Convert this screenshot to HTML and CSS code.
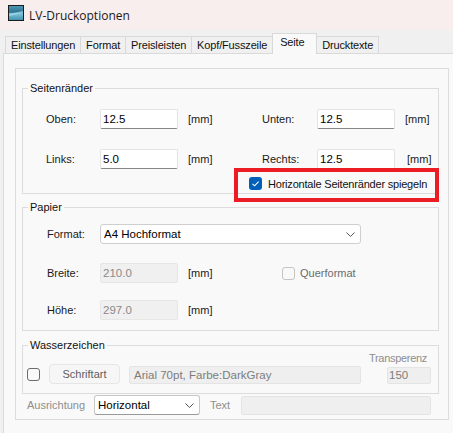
FILE: index.html
```html
<!DOCTYPE html>
<html lang="de">
<head>
<meta charset="utf-8">
<title>LV-Druckoptionen</title>
<link rel="stylesheet" href="styles.css">
</head>
<body>
<div class="titlebar">
  <svg class="appicon" width="16" height="16" viewBox="0 0 16 16">
    <defs>
      <linearGradient id="ig" x1="0" y1="0" x2="0" y2="1">
        <stop offset="0" stop-color="#4f9ab8"/>
        <stop offset="0.45" stop-color="#2d7390"/>
        <stop offset="0.55" stop-color="#7cc2d9"/>
        <stop offset="1" stop-color="#3e8eab"/>
      </linearGradient>
    </defs>
    <rect x="0.5" y="0.5" width="15" height="15" fill="url(#ig)" stroke="#1b1b1b"/>
    <path d="M1 9 L15 6 L15 8 L1 11 Z" fill="#a6dbe9" opacity="0.7"/>
  </svg>
  <span class="title">LV-Druckoptionen</span>
</div>

<div class="tabs">
  <div class="tab">Einstellungen</div>
  <div class="tab">Format</div>
  <div class="tab">Preisleisten</div>
  <div class="tab">Kopf/Fusszeile</div>
  <div class="tab active">Seite</div>
  <div class="tab">Drucktexte</div>
</div>

<div class="panel">
  <div class="frame">
    <fieldset class="group">
      <legend>Seitenränder</legend>
      <div class="margins">
        <div class="margin-grid">
          <span class="lbl">Oben:</span>
          <span class="input">12.5</span>
          <span></span>
          <span class="unit">[mm]</span>
          <span class="lbl">Unten:</span>
          <span class="input">12.5</span>
          <span></span>
          <span class="unit">[mm]</span>

          <span class="lbl">Links:</span>
          <span class="input">5.0</span>
          <span></span>
          <span class="unit">[mm]</span>
          <span class="lbl">Rechts:</span>
          <span class="input">12.5</span>
          <span></span>
          <span class="unit unit-r">[mm]</span>
        </div>
        <div class="mirror-row">
          <span class="cb checked">
            <svg width="13" height="13" viewBox="0 0 13 13"><path d="M3.5 6.8 L5.6 8.8 L9.6 4.6" fill="none" stroke="#fff" stroke-width="1.1"/></svg>
          </span>
          <span class="cb-text">Horizontale Seitenränder spiegeln</span>
          <div class="highlight"></div>
        </div>
      </div>
    </fieldset>

    <fieldset class="group group-paper">
      <legend>Papier</legend>
      <div class="paper">
        <div class="prow">
          <span class="lbl">Format:</span>
          <span class="select select-format">
            <span>A4 Hochformat</span>
            <svg width="9" height="5" viewBox="0 0 9 5"><path d="M0.5 0.5 L4.5 4.5 L8.5 0.5" fill="none" stroke="#555" stroke-width="1"/></svg>
          </span>
        </div>
        <div class="prow prow-2">
          <span class="lbl">Breite:</span>
          <span class="input disabled">210.0</span>
          <span></span>
          <span class="unit">[mm]</span>
          <span class="check-dis"><span class="cb off"></span><span class="dis-text">Querformat</span></span>
        </div>
        <div class="prow prow-3">
          <span class="lbl">Höhe:</span>
          <span class="input disabled">297.0</span>
          <span></span>
          <span class="unit">[mm]</span>
          <span></span>
        </div>
      </div>
    </fieldset>

    <fieldset class="group group-water">
      <legend>Wasserzeichen</legend>
      <div class="water">
        <span class="cb plain"></span>
        <span class="button">Schriftart</span>
        <span class="field field-font">Arial 70pt, Farbe:DarkGray</span>
        <div class="transp">
          <span class="dis-label">Transperenz</span>
          <span class="field field-num">150</span>
        </div>
      </div>
    </fieldset>

    <div class="align-row">
      <span class="dis-label align-lbl">Ausrichtung</span>
      <span class="select select-align">
        <span>Horizontal</span>
        <svg width="9" height="5" viewBox="0 0 9 5"><path d="M0.5 0.5 L4.5 4.5 L8.5 0.5" fill="none" stroke="#555" stroke-width="1"/></svg>
      </span>
      <span class="dis-label text-lbl">Text</span>
      <span class="field field-text"></span>
    </div>
  </div>
</div>
</body>
</html>
```

FILE: styles.css
```css
html, body {
  margin: 0;
  padding: 0;
}
body {
  width: 453px;
  height: 433px;
  overflow: hidden;
  background: #f0f0f0;
  font-family: "Liberation Sans", Arial, sans-serif;
  font-size: 11px;
  color: #1a1a1a;
}

/* title bar */
.titlebar {
  height: 30px;
  background: #f9eeee;
  display: flex;
  align-items: center;
  padding-left: 8px;
  box-sizing: border-box;
}
.appicon {
  display: block;
  margin-bottom: 4px;
}
.title {
  margin-left: 5px;
  font-family: "Open Sans", "Noto Sans", sans-serif;
  font-size: 12px;
  color: #1a1a1a;
}

/* tabs */
.tabs {
  height: 23px;
  display: flex;
  align-items: flex-end;
  padding-left: 5px;
}
.tab {
  height: 17px;
  box-sizing: border-box;
  border: 1px solid #d9d9d9;
  border-bottom: none;
  margin-right: -1px;
  padding: 0 5px;
  line-height: 17px;
  background: #f0f0f0;
  color: #111;
  white-space: nowrap;
  letter-spacing: -0.15px;
}
.tab.active {
  height: 21px;
  margin-bottom: -1px;
  padding: 0 9px 0 7px;
  line-height: 16px;
  background: #f9f9f9;
  position: relative;
  z-index: 1;
  width: 45px;
}

/* panel */
.panel {
  margin-left: 3px;
  border-left: 1px solid #dadada;
  border-top: 1px solid #dadada;
  background: #f9f9f9;
  padding: 14px 0 20px 11px;
  height: 400px;
  box-sizing: border-box;
}
.frame {
  width: 434px;
  box-sizing: border-box;
  border: 1px solid #dcdcdc;
  padding: 13px 9px 4px 6px;
}

/* group boxes */
.group {
  margin: 0;
  padding: 0;
  border: 1px solid #dcdcdc;
  min-width: 0;
}
.group legend {
  margin-left: 5px;
  padding: 0 2px;
  line-height: 13px;
  color: #111;
}
.group-paper {
  margin-top: 7px;
}
.group-water {
  margin-top: 8px;
}

.lbl,
.unit {
  color: #1a1a1a;
}
.unit-r {
  padding-left: 2px;
}

.input {
  height: 20px;
  box-sizing: border-box;
  background: #fff;
  border: 1px solid #e3e3e3;
  border-bottom-color: #868686;
  border-radius: 2px;
  padding-left: 2px;
  line-height: 18px;
  font-size: 11.5px;
  color: #000;
}
.input.disabled {
  background: #f0f0f0;
  border-color: #e6e6e6;
  color: #8a8a8a;
}

/* Seitenränder */
.margins {
  padding: 14px 0 3px 23px;
}
.margin-grid {
  display: grid;
  grid-template-columns: 54px 78px 10px 74px 55px 78px 10px auto;
  grid-template-rows: 20px 20px;
  row-gap: 20px;
  align-items: center;
}
.mirror-row {
  position: relative;
  margin-top: 8px;
  margin-left: 203px;
  height: 13px;
  display: flex;
  align-items: center;
}
.highlight {
  position: absolute;
  left: -15px;
  top: -9px;
  width: 205px;
  height: 34px;
  box-sizing: border-box;
  border: 4px solid #ec1c24;
}
.cb {
  width: 13px;
  height: 13px;
  box-sizing: border-box;
  border-radius: 3px;
  display: inline-block;
  flex: none;
}
.cb svg {
  display: block;
}
.cb.checked {
  background: #005fb8;
}
.cb.plain {
  border: 1px solid #6b6b6b;
  background: #f9f9f9;
}
.cb.off {
  border: 1px solid #c4c4c4;
  background: #f9f9f9;
}
.cb-text {
  margin-left: 6px;
  color: #111;
  white-space: nowrap;
  letter-spacing: -0.2px;
}

/* Papier */
.paper {
  padding: 10px 0 10px 24px;
}
.prow {
  display: grid;
  grid-template-columns: 53px 78px 10px 94px auto;
  height: 20px;
  align-items: center;
}
.prow-2 {
  margin-top: 19px;
}
.prow-3 {
  margin-top: 17px;
}
.select {
  height: 20px;
  box-sizing: border-box;
  background: #fff;
  border: 1px solid #cfcfcf;
  border-radius: 3px;
  display: flex;
  align-items: center;
  justify-content: space-between;
  padding: 0 5px 0 3px;
  color: #000;
  font-size: 11.5px;
}
.select svg {
  display: block;
}
.select-format {
  grid-column: 2 / 6;
  width: 261px;
}
.check-dis {
  display: flex;
  align-items: center;
}
.dis-text {
  margin-left: 5px;
  color: #6c6c6c;
}

/* Wasserzeichen */
.water {
  display: flex;
  align-items: flex-end;
  padding: 0 6px 9px 4px;
}
.water .cb {
  margin-bottom: 3px;
}
.button {
  margin-left: 9px;
  width: 71px;
  height: 20px;
  box-sizing: border-box;
  border: 1px solid #e6e6e6;
  border-radius: 4px;
  background: #f6f6f6;
  color: #5e5e5e;
  text-align: center;
  line-height: 18px;
}
.field {
  height: 18px;
  box-sizing: border-box;
  background: #efefef;
  border: 1px solid #e4e4e4;
  border-radius: 2px;
  color: #7c7c7c;
  line-height: 16px;
  padding-left: 4px;
  font-size: 11.5px;
  white-space: nowrap;
}
.field-font {
  margin-left: 9px;
  width: 232px;
}
.transp {
  margin-left: 8px;
  width: 62px;
  display: flex;
  flex-direction: column;
  align-items: flex-end;
}
.dis-label {
  color: #8e8e8e;
  line-height: 13px;
  white-space: nowrap;
}
.transp .dis-label {
  margin-right: 4px;
  margin-bottom: 2px;
  letter-spacing: -0.3px;
}
.field-num {
  width: 44px;
  height: 17px;
  padding-left: 1px;
  line-height: 15px;
}

/* Ausrichtung row */
.align-row {
  margin-top: 1px;
  height: 20px;
  display: flex;
  align-items: center;
  padding-left: 5px;
}
.align-lbl {
  width: 67px;
}
.select-align {
  width: 106px;
  border-color: #c8c8c8;
  border-bottom-color: #9a9a9a;
}
.text-lbl {
  margin-left: 10px;
  width: 31px;
}
.field-text {
  width: 190px;
  height: 19px;
}
```
